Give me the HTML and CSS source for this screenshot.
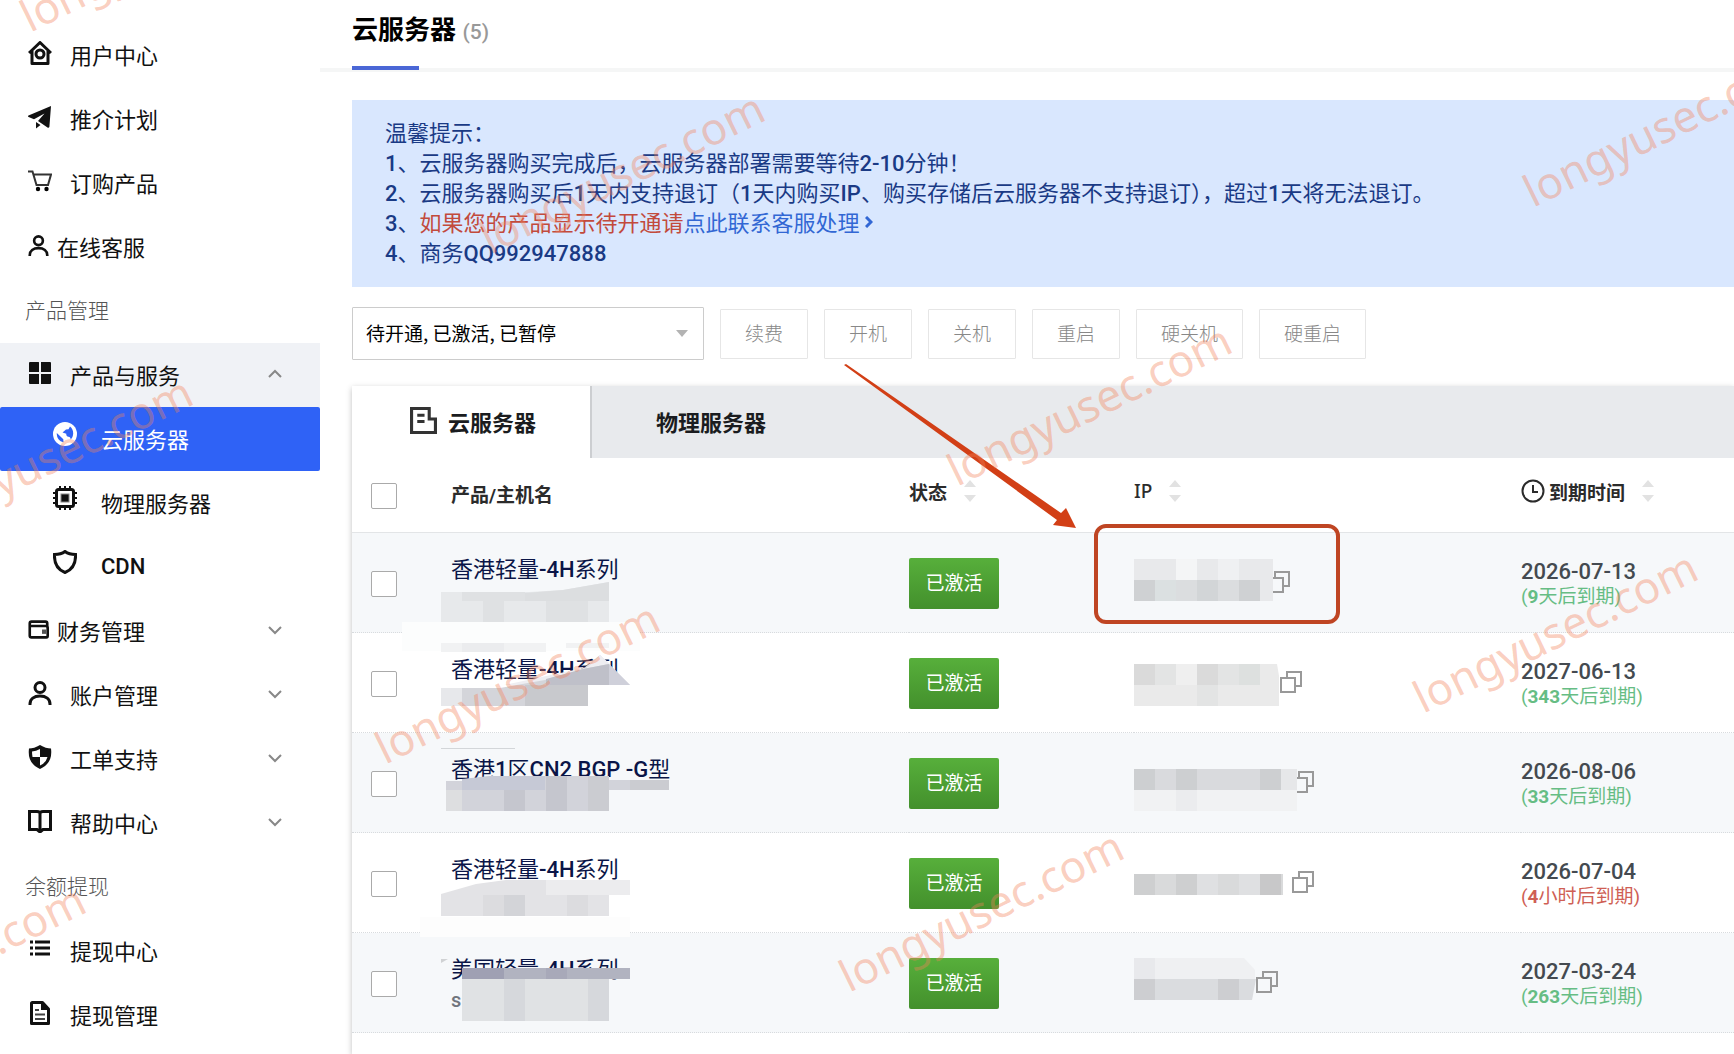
FILE: index.html
```
<!DOCTYPE html>
<html lang="zh-CN">
<head>
  <meta charset="UTF-8">
  <meta name="viewport" content="width=device-width, initial-scale=1">
  <title>云服务器</title>
  <link rel="stylesheet" href="styles.css">
</head>
<body>

  <!-- Shared icons -->
  <svg class="defs" width="0" height="0" aria-hidden="true">
    <symbol id="i-user" viewBox="0 0 24 24"><g fill="none" stroke="currentColor" stroke-width="3"><circle cx="12" cy="6.5" r="5"/><path d="M2 24v-1c0-5 4-8 10-8s10 3 10 8v1"/></g></symbol>
    <symbol id="i-down" viewBox="0 0 14 14"><path d="M1 4l6 6 6-6" fill="none" stroke="currentColor" stroke-width="2"/></symbol>
    <symbol id="i-up" viewBox="0 0 14 14"><path d="M1 10l6-6 6 6" fill="none" stroke="currentColor" stroke-width="2"/></symbol>
    <symbol id="i-sort" viewBox="0 0 12 22"><path d="M0 7l6-7 6 7zM0 15h12l-6 7z" fill="#e2e2e2"/></symbol>
    <symbol id="i-copy" viewBox="0 0 22 22"><g fill="none" stroke="#999" stroke-width="2"><path d="M7 6V1h14v14h-5"/><path d="M1 7h14v14H1z"/></g></symbol>
  </svg>

  <div class="page">
    <!-- Sidebar -->
    <nav class="sidebar">
      <a class="item" href="#"><svg class="icon" viewBox="0 0 24 24"><path d="M1 12L12 1.5 23 12M4 10v12.5h16V10" fill="none" stroke="currentColor" stroke-width="3" stroke-linejoin="round"/><circle cx="12" cy="13" r="4" fill="none" stroke="currentColor" stroke-width="3"/></svg>用户中心</a>
      <a class="item" href="#"><svg class="icon" viewBox="0 0 24 24"><path d="M23 1L.5 10.5c-.7.4-.6 1.200.1 1.500L6 14.200 16.500 8.500 10 16l9.500 6.500c.9.500 1.700.2 1.900-.8zM8 17v6.500l4.500-3.500z" fill="currentColor"/></svg>推介计划</a>
      <a class="item" href="#"><svg class="icon" viewBox="0 0 24 24"><path d="M0 2.500h4.500L8.500 16h11.500l3-10.500H5.500" fill="none" stroke="#333" stroke-width="2"/><circle cx="10" cy="20" r="2.200"/><circle cx="18.500" cy="20" r="2.200"/></svg>订购产品</a>
      <a class="item item-tight" href="#"><svg class="icon"><use href="#i-user"/></svg>在线客服</a>

      <h2 class="group">产品管理</h2>
      <a class="item item-open" href="#"><svg class="icon" viewBox="0 0 24 24"><path d="M2 1h8.500q.5 0 .5.500V11H1V2q0-1 1-1zM13 1h9q1 0 1 1v9H13zM1 13h10v10H2q-1 0-1-1zM13 13h10v9q0 1-1 1h-9z" fill="currentColor"/></svg>产品与服务<svg class="chevron"><use href="#i-up"/></svg></a>
      <a class="item item-sub active" href="#"><svg class="icon" viewBox="0 0 24 24"><circle cx="12" cy="12" r="12" fill="#fff"/><path d="M17 4.500c2 1.500 3.300 4 3.200 7-.1 2.500-1 4.500-2.500 6-.2-1.800-.8-2.500-2.200-2.700-1.500-.2-2.500-1.300-2.200-3L9.500 10.500 13 7.500l2.500-.3zM3.800 11l6.500 6.300.2 3C6.500 19.500 3.500 16 3.800 11z" fill="#2f62f6"/></svg>云服务器</a>
      <a class="item item-sub" href="#"><svg class="icon" viewBox="0 0 24 24"><path d="M7 0v24M12 0v24M17 0v24M0 7h24M0 12h24M0 17h24" stroke="currentColor" stroke-width="2"/><rect x="3.500" y="3.500" width="17" height="17" rx="2" fill="#fff" stroke="currentColor" stroke-width="3"/><rect x="8" y="8" width="8" height="8" fill="currentColor" stroke="#888" stroke-width="1"/></svg>物理服务器</a>
      <a class="item item-sub latin" href="#"><svg class="icon" viewBox="0 0 24 24"><path d="M12 1.500Q8 4.500 1.500 4.500C1 14 4 19.500 12 22.500 20 19.500 23 14 22.500 4.500 16 4.500 12 1.500 12 1.500z" fill="none" stroke="currentColor" stroke-width="3"/></svg>CDN</a>
      <a class="item item-tight" href="#"><svg class="icon" viewBox="0 0 24 24"><path d="M22 8V5q0-2-2-2H4Q2 3 2 5v14q0 2 2 2h17q1.500 0 1.500-2V10q0-2-2-2H2" fill="none" stroke="currentColor" stroke-width="3"/><path d="M16 12h5v5h-5z" fill="#555"/></svg>财务管理<svg class="chevron"><use href="#i-down"/></svg></a>
      <a class="item" href="#"><svg class="icon"><use href="#i-user"/></svg>账户管理<svg class="chevron"><use href="#i-down"/></svg></a>
      <a class="item" href="#"><svg class="icon" viewBox="0 0 24 24"><path d="M12 0q6 3.500 11 3.500Q25 18 12 24-1 18 1 3.500 6 3.500 12 0z" fill="currentColor"/><path d="M12 4v8H4.500Q4 9 4 6.500 8 6 12 4zM12 12h7.500q-1.500 6-7.500 8.500z" fill="#fff"/></svg>工单支持<svg class="chevron"><use href="#i-down"/></svg></a>
      <a class="item" href="#"><svg class="icon" viewBox="0 0 24 24"><path d="M1.500 2.500H9q3 0 3 2 0-2 3-2h7.500v18H15l-3 2.500-3-2.500H1.500zM12 3v18" fill="none" stroke="currentColor" stroke-width="3"/></svg>帮助中心<svg class="chevron"><use href="#i-down"/></svg></a>

      <h2 class="group">余额提现</h2>
      <a class="item" href="#"><svg class="icon" viewBox="0 0 24 24"><path d="M2 5h3M7 5h15M2 11h3M7 11h15M2 17h3M7 17h15" stroke="currentColor" stroke-width="3"/></svg>提现中心</a>
      <a class="item" href="#"><svg class="icon" viewBox="0 0 24 24"><path d="M4 1.500h10.500L20.500 8v14.500h-17V2z" fill="none" stroke="currentColor" stroke-width="3" stroke-linejoin="round"/><path d="M13 1v8h8z" fill="currentColor"/><path d="M7 9h4M7 13.500h10M7 18h10" stroke="#444" stroke-width="2"/></svg>提现管理</a>
    </nav>

    <main class="main">
      <header class="header">
        <h1 class="title">云服务器 <span class="count">(5)</span></h1>
      </header>

      <div class="content">
        <!-- Notice -->
        <section class="notice">
          <p>温馨提示：</p>
          <p><b>1</b>、云服务器购买完成后，云服务器部署需要等待<b>2-10</b>分钟！</p>
          <p><b>2</b>、云服务器购买后<b>1</b>天内支持退订（<b>1</b>天内购买<b>IP</b>、购买存储后云服务器不支持退订），超过<b>1</b>天将无法退订。</p>
          <p><b>3</b>、<span class="warn">如果您的产品显示待开通请</span><a href="#">点此联系客服处理 <svg class="go" viewBox="0 0 8 12"><path d="M1 1l5 5-5 5" fill="none" stroke="currentColor" stroke-width="3"/></svg></a></p>
          <p><b>4</b>、商务<b>QQ992947888</b></p>
        </section>

        <!-- Filter and bulk actions -->
        <div class="toolbar">
          <div class="filter">
            <select aria-label="状态筛选"><option>待开通, 已激活, 已暂停</option></select>
            <svg class="caret" viewBox="0 0 12 7"><path d="M0 0h12L6 7z" fill="#b3b3b3"/></svg>
          </div>
          <button class="btn" type="button">续费</button>
          <button class="btn" type="button">开机</button>
          <button class="btn" type="button">关机</button>
          <button class="btn" type="button">重启</button>
          <button class="btn" type="button">硬关机</button>
          <button class="btn" type="button">硬重启</button>
        </div>

        <section class="card">
          <div class="tabs">
            <button class="tab tab-on" type="button"><svg viewBox="0 0 26 26"><path d="M1.500 1.500h17v10h6v13h-23zM7 8h7M7 14h7" fill="none" stroke="currentColor" stroke-width="3"/></svg>云服务器</button>
            <button class="tab" type="button">物理服务器</button>
          </div>

          <table class="table">
            <colgroup><col class="c-check"><col class="c-name"><col class="c-state"><col class="c-ip"><col></colgroup>
            <thead>
              <tr>
                <th><input type="checkbox" aria-label="全选"></th>
                <th>产品/主机名</th>
                <th><span class="head">状态<svg class="sort"><use href="#i-sort"/></svg></span></th>
                <th><span class="head head-ip">IP<svg class="sort"><use href="#i-sort"/></svg></span></th>
                <th><span class="head"><svg class="clock" viewBox="0 0 24 24"><circle cx="12" cy="12" r="10.500" fill="none" stroke="currentColor" stroke-width="2"/><path d="M12 6v7h5" fill="none" stroke="currentColor" stroke-width="2"/></svg>到期时间<svg class="sort"><use href="#i-sort"/></svg></span></th>
              </tr>
            </thead>
            <tbody>
              <tr>
                <td><input type="checkbox" aria-label="选择第1项"></td>
                <td class="name"><a href="#">香港轻量<b>-4H</b>系列</a>
                  <svg class="mask" width="260" height="130"><path d="M-38 89h238v29H-38z" fill="#fcfdfd"/><path d="M1 59h88l34-2 46-8v40H1z" fill="#e7e9eb"/><path d="M22 59h21v9H22zM64 59h21v9H64z" fill="#dfe1e3"/><path d="M43 59h21v30H43zM106 68h42v21h-42z" fill="#dfe1e3"/><path d="M85 60l38-3 46-8v19H85z" fill="#dcdee0"/><path d="M1 110h105v9H1zM126 110h43v5h-43z" fill="#f1f2f3"/><path d="M22 110h42v9H22z" fill="#ebecee"/></svg>
                </td>
                <td><span class="state">已激活</span></td>
                <td><div class="ip"><svg class="blur" width="134" height="42" viewBox="0 3 134 42"><path d="M0 0h139v42H0z" fill="#e8e9eb"/><path d="M42 0h21v21H42z" fill="#f4f5f6"/><path d="M84 0h21v21H84z" fill="#eff0f2"/><path d="M0 21h21v21H0zM105 21h21v21h-21z" fill="#cfd1d3"/><path d="M21 21h21v21H21z" fill="#dbe0e1"/><path d="M42 21h21v21H42zM84 21h21v21H84z" fill="#dbdddf"/><path d="M63 21h21v21H63z" fill="#d2d5d7"/></svg><button class="copy" type="button" aria-label="复制"><svg><use href="#i-copy"/></svg></button></div></td>
                <td><div class="date">2026-07-13</div><div class="left">(<b>9</b>天后到期)</div></td>
              </tr>
              <tr>
                <td><input type="checkbox" aria-label="选择第2项"></td>
                <td class="name"><a href="#">香港轻量<b>-4H</b>系列</a>
                  <svg class="mask" width="260" height="130"><path d="M160 22l9 9 21 21h-21V31l-25 4z" fill="#dedfe5"/><path d="M148 34l12-12 10 9v21H64z" fill="#eeeef2"/><path d="M1 55h59l45-8 38-11 26-5v21h-21v21H1z" fill="#d4d5da"/><path d="M106 46l37-10 26-5v21h-63z" fill="#bfc0c9"/><path d="M169 31l21 21h-21z" fill="#cfd0da"/><path d="M1 55h21v18H1z" fill="#e7e8eb"/><path d="M85 52h63v21H85z" fill="#c8c9cd"/></svg>
                </td>
                <td><span class="state">已激活</span></td>
                <td><div class="ip"><svg class="blur" width="146" height="42" viewBox="0 -2 146 42"><path d="M0 0h143l2 12v30H0z" fill="#eaeaea"/><path d="M0 0h21v21H0zM63 0h21v21H63z" fill="#dadada"/><path d="M21 0h21v21H21zM84 0h21v21H84zM63 21h21v21H63z" fill="#e3e4e4"/><path d="M105 0h21v21h-21z" fill="#dde0df"/><path d="M42 0h21v21H42z" fill="#efefef"/></svg><button class="copy" type="button" aria-label="复制"><svg><use href="#i-copy"/></svg></button></div></td>
                <td><div class="date">2027-06-13</div><div class="left">(<b>343</b>天后到期)</div></td>
              </tr>
              <tr>
                <td><input type="checkbox" aria-label="选择第3项"></td>
                <td class="name"><a href="#">香港<b>1</b>区<b>CN2 BGP -G</b>型</a>
                  <svg class="mask" width="260" height="130"><path d="M1 15h74v1H1z" fill="#d3d6d9"/><path d="M50 43h119v4h60v10h-60v21H6V48h16z" fill="#d2d3da"/><path d="M22 46l28-3h55v14H22z" fill="#c6c9d6"/><path d="M106 43h21v35h-21zM64 57h21v21H64z" fill="#c5c6ce"/><path d="M148 43h21v35h-21zM190 47h39v10h-39z" fill="#cbccd1"/><path d="M6 57h16v21H6z" fill="#dddee0"/></svg>
                </td>
                <td><span class="state">已激活</span></td>
                <td><div class="ip"><svg class="blur" width="158" height="42" viewBox="0 -7 158 42"><path d="M0 0h163v21H0z" fill="#d9dadd"/><path d="M0 0h21v21H0zM42 0h21v21H42zM126 0h21v21h-21z" fill="#cdcfd1"/><path d="M147 0h16v21h-16z" fill="#e6e7e9"/><path d="M0 21h163v21H0z" fill="#f1f2f3"/><path d="M42 21h21v21H42z" fill="#ebecee"/></svg><button class="copy" type="button" aria-label="复制"><svg><use href="#i-copy"/></svg></button></div></td>
                <td><div class="date">2026-08-06</div><div class="left">(<b>33</b>天后到期)</div></td>
              </tr>
              <tr>
                <td><input type="checkbox" aria-label="选择第4项"></td>
                <td class="name"><a href="#">香港轻量<b>-4H</b>系列</a>
                  <svg class="mask" width="260" height="130"><path d="M-20 84h210v20H-20z" fill="#fdfdfd"/><path d="M1 61l35-10 30-4h103v36H1z" fill="#e3e3e6"/><path d="M106 47h63v15h-63zM169 47h21v15h-21z" fill="#ececee"/><path d="M43 62h21v21H43zM127 62h21v21h-21z" fill="#dcdcdf"/><path d="M64 62h21v21H64z" fill="#d3d4d8"/></svg>
                </td>
                <td><span class="state">已激活</span></td>
                <td><div class="ip"><svg class="blur" width="158" height="21" viewBox="0 -2 158 21"><path d="M0 0h149v21H0z" fill="#d9dadb"/><path d="M0 0h21v21H0zM42 0h21v21H42z" fill="#cecfd0"/><path d="M126 0h21v21h-21z" fill="#c8c8c9"/><path d="M63 0h21v21H63zM105 0h21v21h-21z" fill="#dfe0e2"/></svg><button class="copy" type="button" aria-label="复制"><svg><use href="#i-copy"/></svg></button></div></td>
                <td><div class="date">2026-07-04</div><div class="left left-soon">(<b>4</b>小时后到期)</div></td>
              </tr>
              <tr>
                <td><input type="checkbox" aria-label="选择第5项"></td>
                <td class="name"><a href="#">美国轻量<b>-4H</b>系列</a><small>s</small>
                  <svg class="mask" width="260" height="130"><path d="M1 26h7l-7 4z" fill="#d0d2d4"/><path d="M22 46h147v42H22z" fill="#e0e2e4"/><path d="M64 46h21v42H64zM148 46h21v42h-21z" fill="#d6d8dc"/><path d="M22 35h168v11H22z" fill="#b1b3c0"/><path d="M22 35h42v11H22z" fill="#9fa0b3"/><path d="M106 35h21v11h-21z" fill="#a8a9b9"/></svg>
                </td>
                <td><span class="state">已激活</span></td>
                <td><div class="ip"><svg class="blur" width="122" height="42" viewBox="0 4 122 42"><path d="M0 0h110l11 12v12l-3 18H0z" fill="#eff0f2"/><path d="M0 0h21v21H0z" fill="#e8e9ec"/><path d="M0 21h122l-4 21H0z" fill="#dadcdf"/><path d="M0 21h21v21H0zM84 21h21v21H84z" fill="#cdced1"/></svg><button class="copy" type="button" aria-label="复制"><svg><use href="#i-copy"/></svg></button></div></td>
                <td><div class="date">2027-03-24</div><div class="left">(<b>263</b>天后到期)</div></td>
              </tr>
            </tbody>
          </table>
        </section>
      </div>
    </main>
  </div>

  <!-- Annotation and watermark layer -->
  <svg class="overlay" aria-hidden="true">
    <path class="arrow" d="M844 365l2-1 215 149 5-5 10 20-23-3 4-5z"/>
    <rect class="frame" x="1096" y="526" width="242" height="96" rx="10"/>
    <g class="watermark">
      <text transform="translate(30 33) rotate(-26)">longyusec.com</text>
      <text transform="translate(490 255) rotate(-26)">longyusec.com</text>
      <text transform="translate(1533 208) rotate(-26)">longyusec.com</text>
      <text transform="translate(957 487) rotate(-26)">longyusec.com</text>
      <text transform="translate(-82 539) rotate(-26)">longyusec.com</text>
      <text transform="translate(385 765) rotate(-26)">longyusec.com</text>
      <text transform="translate(1423 714) rotate(-26)">longyusec.com</text>
      <text transform="translate(849 993) rotate(-26)">longyusec.com</text>
      <text transform="translate(-189 1047) rotate(-26)">longyusec.com</text>
    </g>
  </svg>
</body>
</html>
```
FILE: styles.css
```
* {
  margin: 0;
  padding: 0;
  box-sizing: border-box;
}

body {
  font-family: Roboto, "Noto Sans CJK SC", sans-serif;
  font-size: 22px;
  color: #111;
  background: #fff;
}

a {
  color: inherit;
  text-decoration: none;
}

button {
  font-family: inherit;
  cursor: pointer;
}

.defs {
  position: absolute;
}

.page {
  position: relative;
  display: flex;
  height: 100vh;
  min-height: 1050px;
  overflow: hidden;
}

/* Sidebar */
.sidebar {
  flex: 0 0 320px;
  padding-top: 23px;
}

.item {
  display: flex;
  align-items: center;
  height: 64px;
  padding: 0 38px 2px 28px;
  font-family: "Noto Sans CJK SC", sans-serif;
}

.icon {
  width: 24px;
  height: 24px;
  margin: 0 18px 2px 0;
}

.item-tight .icon {
  width: 21px;
  height: 21px;
  margin-right: 8px;
}

.item-open {
  background: #f0f2f6;
}

.item-sub {
  padding-left: 53px;
}

.item-sub .icon {
  margin: 0 24px 8px 0;
}

.latin {
  font-family: Roboto, sans-serif;
  font-weight: 500;
}

.active {
  background: #2f62f6;
  color: #fff;
  border-radius: 2px;
}

.chevron {
  width: 14px;
  height: 14px;
  margin-left: auto;
  color: #888;
}

.group {
  height: 64px;
  padding: 0 25px;
  font-size: 21px;
  font-weight: 300;
  line-height: 64px;
  color: #555;
}

/* Header */
.main {
  display: flex;
  flex: 1;
  flex-direction: column;
  min-width: 0;
}

.header {
  height: 72px;
  padding-left: 32px;
  border-bottom: 4px solid #f5f6f6;
}

.title {
  height: 68px;
  font-size: 26px;
  line-height: 60px;
  color: #000;
}

.title::after {
  content: '';
  display: block;
  width: 67px;
  height: 4px;
  margin-top: 4px;
  background: #4a67d6;
}

.count {
  font-size: 21px;
  font-weight: 500;
  color: #999;
}

.content {
  display: flex;
  flex: 1;
  flex-direction: column;
  padding: 28px 0 0 32px;
}

/* Notice */
.notice {
  padding: 19px 33px 18px;
  line-height: 30px;
  color: #1a3a85;
  background: #d9e7fe;
}

.notice p {
  white-space: nowrap;
}

.notice b,
.name b {
  font-weight: 500;
}

.notice .warn {
  color: #c24a3c;
}

.notice a {
  color: #3267d4;
}

.go {
  width: 8px;
  height: 12px;
  margin-bottom: 3px;
}

/* Toolbar */
.toolbar {
  display: flex;
  align-items: center;
  gap: 16px;
  padding: 20px 0 26px;
}

.filter {
  position: relative;
  flex: 0 0 352px;
}

.filter select {
  display: block;
  width: 100%;
  height: 53px;
  padding: 0 13px 2px;
  font-family: "Noto Sans CJK SC", sans-serif;
  font-size: 19px;
  color: #000;
  background: #fff;
  border: 1px solid #ccc;
  border-radius: 1px;
  appearance: none;
}

.caret {
  position: absolute;
  top: 23px;
  right: 16px;
  width: 12px;
  height: 7px;
}

.btn {
  height: 50px;
  padding: 0 24px 2px;
  font-size: 19px;
  font-weight: 300;
  color: #888;
  background: #fff;
  border: 1px solid #e6e6e6;
  border-radius: 1px;
}

/* Product card */
.card {
  flex: 1;
  background: #fff;
  box-shadow: 0 2px 6px rgba(0, 0, 0, 0.25);
}

.tabs {
  display: flex;
  height: 72px;
  background: #e8eaed;
}

.tab {
  display: flex;
  align-items: center;
  gap: 11px;
  padding: 0 64px 3px;
  font-size: 22px;
  font-weight: 700;
  color: #1a1c20;
  background: none;
  border: 0;
  border-left: 2px solid #ccced1;
}

.tab svg {
  width: 27px;
  height: 27px;
  color: #333;
}

.tab-on {
  width: 238px;
  padding: 0 0 3px 58px;
  background: #fff;
  border: 0;
}

.table {
  width: 100%;
  table-layout: fixed;
  border-spacing: 0;
}

.c-check { width: 88px; }
.c-name { width: 469px; }
.c-state { width: 225px; }
.c-ip { width: 28%; }

th {
  height: 75px;
  font-size: 19px;
  text-align: left;
  color: #2b2b2b;
  border-bottom: 1px solid #e3e5e7;
}

th:nth-child(2) {
  padding: 0 0 3px 11px;
}

th:first-child,
td:first-child {
  padding: 2px 0 0 19px;
}

input[type="checkbox"] {
  display: block;
  width: 26px;
  height: 26px;
  background: #fff;
  border: 1px solid #aaa;
  border-radius: 2px;
  appearance: none;
}

.head {
  display: flex;
  align-items: center;
  padding-bottom: 8px;
}

.head-ip {
  font-family: "Noto Sans", sans-serif;
  font-weight: 500;
}

.sort {
  width: 12px;
  height: 22px;
  margin-left: 17px;
}

.clock {
  width: 24px;
  height: 24px;
  margin-right: 4px;
}

td {
  height: 100px;
  vertical-align: middle;
  border-bottom: 1px dotted #d8dbde;
}

tbody tr:nth-child(odd) {
  background: #f6f8fa;
}

.name {
  position: relative;
  padding: 21px 0 0 11px;
  vertical-align: top;
  line-height: 32px;
  color: #0a1547;
}

.name small {
  display: block;
  font-size: 20px;
  font-weight: 500;
  line-height: 28px;
  color: #70757d;
}

/* Pixelated patches over private text */
.mask {
  position: absolute;
  top: 0;
  left: 0;
  overflow: visible;
  pointer-events: none;
}

.state {
  display: block;
  width: 90px;
  height: 51px;
  margin-top: 2px;
  font-size: 19px;
  line-height: 51px;
  text-align: center;
  color: #fff;
  background: linear-gradient(#57af3b, #43902c);
  border-radius: 2px;
}

.ip {
  display: flex;
  align-items: center;
}

.blur {
  position: relative;
  overflow: visible;
}

.copy {
  width: 22px;
  height: 22px;
  margin-bottom: 2px;
  background: none;
  border: 0;
}

.copy svg {
  display: block;
  width: 22px;
  height: 22px;
}

.date {
  padding-top: 4px;
  font-weight: 500;
  line-height: 24px;
  color: #444a50;
}

.left {
  font-size: 19px;
  line-height: 26px;
  color: #66bd84;
}

.left-soon {
  color: #cf5f55;
}

/* Annotation layer */
.overlay {
  position: absolute;
  top: 0;
  left: 0;
  width: 100%;
  height: 100%;
  pointer-events: none;
}

.arrow {
  fill: #d23f16;
}

.frame {
  fill: none;
  stroke: #bf4523;
  stroke-width: 4;
}

.watermark {
  font-family: "Noto Sans", sans-serif;
  font-size: 44px;
  fill: rgba(244, 130, 90, 0.4);
}
```
